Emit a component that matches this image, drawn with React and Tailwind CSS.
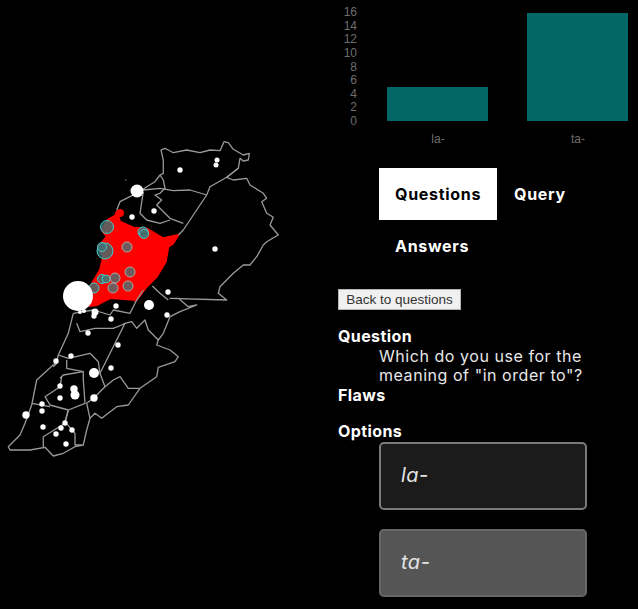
const FONT = "font-['Inter','Liberation_Sans',sans-serif]";

// map traces were read off the zoomed crops, so they are kept in crop coordinates
const top = (pts) => pts.map(([x, y]) => [x / 3, y / 3 + 130]);
const bottom = (pts) => pts.map(([x, y]) => [x / 3, y / 3 + 290]);
const toPath = (pts) => "M" + pts.map(([x, y]) => `${x.toFixed(1)} ${y.toFixed(1)}`).join("L");

const OUTLINE = [
  ...top([[350, 240], [360, 215], [420, 185], [440, 170], [465, 155], [480, 135], [490, 130], [490, 90], [483, 60], [495, 55], [520, 68], [560, 60], [600, 68], [630, 60], [660, 62], [672, 35], [685, 38], [700, 58], [730, 75], [748, 70], [745, 90], [730, 93], [720, 85], [715, 115], [680, 142], [700, 150], [740, 145], [750, 165], [790, 190], [800, 205], [785, 215], [800, 250], [820, 262], [810, 285], [835, 315], [800, 335], [790, 345], [770, 380], [750, 405], [730, 405], [700, 430], [660, 470], [655, 490], [680, 510]]),
  ...bottom([[510, 25], [535, 25], [565, 50], [590, 45], [540, 65], [510, 80], [490, 130], [475, 150], [470, 165], [510, 180], [535, 200], [525, 215], [475, 232], [470, 260], [420, 295], [385, 345], [350, 350], [305, 385], [285, 370], [270, 385], [260, 420], [250, 465], [225, 470], [190, 490], [160, 498], [135, 472], [90, 480], [30, 480], [25, 470], [60, 435], [75, 400], [95, 345], [110, 270], [170, 215], [175, 195], [205, 130], [220, 70]]),
];

const BORDERS = [
  top([[430, 180], [480, 175], [520, 182], [570, 180], [620, 195]]),
  top([[480, 135], [490, 150], [495, 175], [480, 190], [465, 195], [485, 210], [470, 225], [510, 265], [550, 280]]),
  top([[430, 185], [420, 250], [440, 270], [480, 280], [510, 270]]),
  top([[715, 115], [680, 142], [630, 170], [620, 195], [550, 300], [535, 315]]),
  top([[457, 468], [480, 490], [505, 510]]),
  bottom([[220, 70], [280, 60], [330, 75], [340, 60], [390, 70], [410, 30], [430, 0]]),
  bottom([[230, 100], [240, 125], [285, 115], [340, 115], [365, 105], [375, 100], [340, 170], [300, 250], [315, 290]]),
  bottom([[375, 100], [395, 95], [410, 115], [435, 90], [445, 120], [475, 150]]),
  bottom([[175, 195], [205, 205], [270, 190], [295, 215], [300, 250]]),
  bottom([[160, 230], [175, 215]]),
  bottom([[200, 210], [200, 235], [250, 245], [250, 270], [255, 340], [205, 360]]),
  bottom([[180, 265], [190, 255], [250, 245]]),
  bottom([[185, 260], [180, 290], [135, 320], [150, 345], [205, 360]]),
  bottom([[95, 340], [150, 350]]),
  bottom([[205, 360], [195, 400], [130, 440], [130, 475]]),
  bottom([[205, 360], [195, 395], [225, 430], [225, 465], [245, 465]]),
  bottom([[315, 290], [340, 270], [360, 260], [385, 295], [420, 295]]),
  bottom([[315, 290], [285, 320], [260, 340], [270, 385]]),
];

const RED_AREA = [
  ...top([[350, 245], [360, 275], [400, 293], [440, 296], [490, 325], [535, 315], [520, 340], [505, 350], [497, 395], [470, 440], [440, 470], [420, 497], [405, 512]]),
  ...bottom([[410, 30], [330, 24], [290, 45], [270, 48]]),
  ...top([[270, 470], [300, 420], [310, 380], [296, 350], [320, 320], [305, 300], [325, 268], [345, 258]]),
];

const MARKERS = [
  [107, 227, 6.5, true], [105, 251, 8, true], [102, 247, 4.5, true], [127, 247, 5, false],
  [143, 232, 5, true], [144, 234, 4.5, true], [130, 272, 5, false], [102, 279, 4.5, true],
  [106, 279, 4, true], [115, 278, 5, false], [113, 288, 5, false], [128, 286, 5, false], [94, 288, 5, true],
];

const DOTS = [
  [137, 191, 6.5], [217, 160, 2.5], [216, 165, 2.5], [180, 170, 2.7], [154, 211, 2.7], [132, 217, 2.7],
  [215, 249, 2.7], [168, 292, 2.7], [78, 296, 15], [149, 305, 5], [116, 306, 2.7], [167, 315, 2.7],
  [95, 312, 3.5], [94, 316, 2.7], [111, 319, 2.7], [80, 312, 2], [84, 311, 2], [88, 333, 2.7],
  [118, 345, 2.7], [71, 356, 2.7], [56, 361, 2.7], [111, 368, 2.7], [94, 373, 5], [60, 386, 2.7],
  [74, 389, 3.7], [75, 395, 4.5], [60, 398, 2.7], [94, 398, 3.7], [42, 404, 2.7], [42, 411, 2.7],
  [26, 415, 3.7], [43, 427, 2.7], [65, 423, 2.7], [61, 428, 2.7], [72, 430, 2.7], [56, 434, 2.7], [66, 444, 2.7],
];

const TICKS = [16, 14, 12, 10, 8, 6, 4, 2, 0];

function LebanonMap() {
  return (
    <svg width="338" height="609" className="block shrink-0">
      <path d={toPath(RED_AREA) + "Z"} fill="#fe0000" stroke="#fe0000" strokeWidth="2" strokeLinejoin="round" />
      <circle cx="120" cy="213" r="4" fill="#fe0000" />
      <g fill="none" stroke="#9a9a9a" strokeWidth="1.3" strokeLinejoin="round">
        <path d={toPath(OUTLINE)} />
        {BORDERS.map((pts, i) => (
          <path key={i} d={toPath(pts)} />
        ))}
      </g>
      <circle cx="126" cy="180" r="0.8" fill="#777" />
      {MARKERS.map(([cx, cy, r, teal], i) => (
        <circle key={i} cx={cx} cy={cy} r={r} fill={teal ? "#3f7272" : "#6e5c5c"} fillOpacity={teal ? 0.8 : 1} stroke={teal ? "#45caca" : "#b0a8a8"} strokeWidth="1" />
      ))}
      {DOTS.map(([cx, cy, r], i) => (
        <circle key={i} cx={cx} cy={cy} r={r} fill="#fff" />
      ))}
    </svg>
  );
}

function AnswerChart() {
  return (
    <svg width="300" height="150" className="block">
      <g fill="#6e6e6e" fontSize="12" fontFamily="Liberation Sans, sans-serif">
        {TICKS.map((t) => (
          <text key={t} x="19" y={121 - t * 6.8 + 4} textAnchor="end">{t}</text>
        ))}
        <text x="100" y="143" textAnchor="middle">la-</text>
        <text x="240" y="143" textAnchor="middle">ta-</text>
      </g>
      <rect x="49" y="87" width="101" height="34" fill="#006666" />
      <rect x="189" y="13" width="101" height="108" fill="#006666" />
    </svg>
  );
}

function Option({ label, selected }) {
  return (
    <div className={`w-[208px] h-[68px] flex items-center pl-5 rounded-[5px] border-2 text-[20px] italic text-[#e4e4e4] tracking-[0.5px] ${selected ? "bg-[#555555] border-[#666666]" : "bg-[#1b1b1b] border-[#7a7a7a]"}`}>
      {label}
    </div>
  );
}

export default function App() {
  return (
    <div className={`w-[638px] h-[609px] overflow-hidden bg-black text-white flex ${FONT}`}>
      <LebanonMap />
      <div className="w-[300px] shrink-0">
        <AnswerChart />
        <div className="mt-[18px] ml-[41px] flex flex-wrap w-[259px] text-[16px] font-bold leading-5 tracking-[0.7px]">
          <div className="w-[118px] h-[52px] px-4 flex items-center bg-white text-black">Questions</div>
          <div className="h-[52px] pl-[17px] pr-4 flex items-center">Query</div>
          <div className="h-[52px] px-4 flex items-center">Answers</div>
        </div>
        <button className="mt-[17px] block w-[123px] h-[21px] bg-[#f0f0f0] border border-[#b4b4b4] text-[13.5px] leading-4 text-[#333333] font-['Liberation_Sans',sans-serif]">
          Back to questions
        </button>
        <dl className="mt-[17px] text-[16px] leading-[19.5px]">
          <dt className="font-bold tracking-[0.4px]">Question</dt>
          <dd className="ml-[41px] text-[#e8e8e8] tracking-[0.55px]">
            Which do you use for the
            <br />
            meaning of "in order to"?
          </dd>
          <dt className="font-bold tracking-[0.4px]">Flaws</dt>
          <dd className="h-[17px]" />
          <dt className="font-bold tracking-[0.4px]">Options</dt>
          <dd className="ml-[41px] flex flex-col gap-[19px]">
            <Option label="la-" />
            <Option label="ta-" selected />
          </dd>
        </dl>
      </div>
    </div>
  );
}
